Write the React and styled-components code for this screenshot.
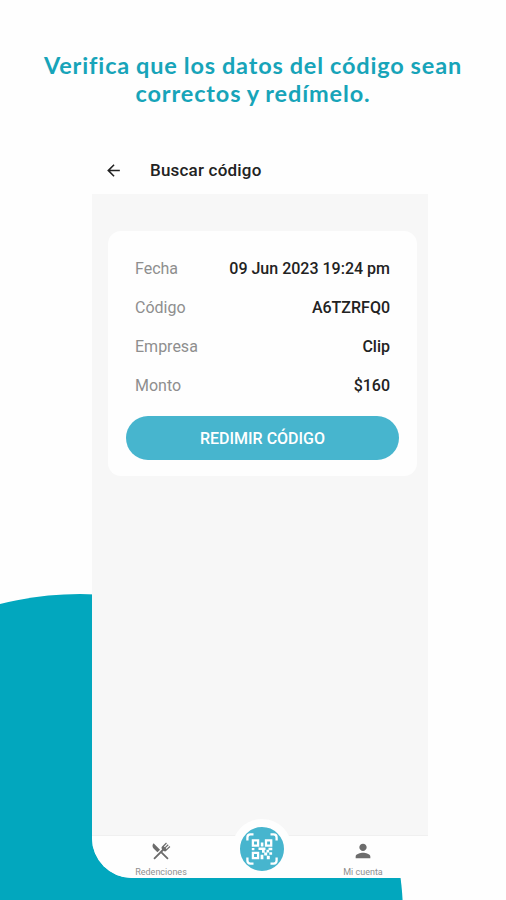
import React from "react";
import styled, { createGlobalStyle } from "styled-components";
import { MdArrowBack, MdPerson } from "react-icons/md";

const GlobalStyle = createGlobalStyle`
    * {
        box-sizing: border-box;
    }

    body {
        margin: 0;
        background-color: #fefefe;
    }
`;

const Page = styled.main`
    position: relative;
    width: 506px;
    height: 900px;
    overflow: hidden;
    background-color: #fefefe;
    font-family: Roboto, "Liberation Sans", sans-serif;
`;

const Blob = styled.div`
    position: absolute;
    left: -243px;
    top: 594px;
    width: 646px;
    height: 646px;
    border-radius: 50%;
    background-color: #02a7be;
`;

const Title = styled.h1`
    height: 147px;
    margin: 0;
    padding-top: 52px;
    color: #17a4b9;
    font-family: Lato, "Open Sans", sans-serif;
    font-size: 23.5px;
    font-weight: 700;
    line-height: 27.5px;
    letter-spacing: 0.85px;
    word-spacing: -0.6px;
    text-align: center;
    white-space: nowrap;
`;

const Phone = styled.section`
    position: relative;
    display: flex;
    flex-direction: column;
    width: 336px;
    height: 731px;
    margin-left: 92px;
    overflow: hidden;
    border-bottom-left-radius: 40px;
    background-color: #f7f7f7;
`;

const TopBar = styled.header`
    display: flex;
    align-items: center;
    gap: 27px;
    height: 47px;
    padding: 0 0 1px 12px;
    background-color: #fefefe;
    color: #222;
`;

const TopBarTitle = styled.h2`
    margin: 0;
    font-size: 17px;
    font-weight: 500;
    letter-spacing: 0.2px;
`;

const Body = styled.div`
    flex: 1;
    padding: 37px 11px 0 16px;
`;

const Card = styled.div`
    height: 245px;
    padding: 18.4px 18px 0;
    border-radius: 13px;
    background-color: #fefefe;
`;

const Row = styled.div`
    display: flex;
    align-items: center;
    justify-content: space-between;
    height: 38.8px;
    padding: 0 9px;
    font-size: 16px;
`;

const Label = styled.span`
    color: #8e8e8e;
`;

const Value = styled.span`
    color: #222;
    font-weight: 500;
`;

const RedeemButton = styled.button`
    display: block;
    width: 273px;
    height: 44px;
    margin-top: 11.8px;
    padding: 0;
    border: 0;
    border-radius: 22px;
    background-color: #47b5ce;
    color: #fff;
    font-family: inherit;
    font-size: 16px;
    font-weight: 500;
`;

const NavBar = styled.nav`
    position: relative;
    display: flex;
    justify-content: space-between;
    height: 43px;
    padding: 0 30px 0 34px;
    border-top: 1px solid #f0f0f0;
    background-color: #fefefe;
`;

const NavItem = styled.div`
    display: flex;
    flex-direction: column;
    align-items: center;
    width: 70px;
    padding-top: 4px;
    color: #6c6c6c;
`;

const NavLabel = styled.span`
    margin-top: 5px;
    color: #8f8f8f;
    font-size: 9px;
    line-height: 11px;
`;

const ScanButton = styled.div`
    position: absolute;
    left: 140px;
    top: -17px;
    display: flex;
    align-items: center;
    justify-content: center;
    width: 60px;
    height: 60px;
    border: 8px solid #fefefe;
    border-radius: 50%;
    background-color: #47b5ce;
`;

const SilverwareIcon = () => (
    <svg width="22" height="22" viewBox="0 0 24 24" fill="currentColor">
        <path d="M8.1 13.34L3.91 9.16C2.35 7.59 2.35 5.06 3.91 3.5L10.93 10.5L8.1 13.34M13.41 13L20.29 19.88L18.88 21.29L12 14.41L5.12 21.29L3.71 19.88L13.36 10.22L13.16 10C12.38 9.23 12.38 7.97 13.16 7.19L17.5 2.82L18.43 3.74L15.19 7L16.15 7.94L19.39 4.69L20.31 5.61L17.06 8.85L18 9.81L21.26 6.56L22.18 7.5L17.81 11.84C17.03 12.62 15.77 12.62 15 11.84L14.78 11.64L13.41 13Z" />
    </svg>
);

const QrIcon = () => (
    <svg width="32" height="32" viewBox="0 0 32 32" fill="none" stroke="#fff">
        <path
            d="M1.4 7.5V4.4Q1.4 1.4 4.4 1.4H7.5M24.5 1.4H27.6Q30.6 1.4 30.6 4.4V7.5M1.4 24.5V27.6Q1.4 30.6 4.4 30.6H7.5M24.5 30.6H27.6Q30.6 30.6 30.6 27.6V24.5"
            strokeWidth="2.3"
        />
        <path d="M6.9 7.4h5.2v5.2H6.9zM20 7.4h5.2v5.2H20zM6.9 19.9h5.2v5.2H6.9z" strokeWidth="2.3" />
        <path
            d="M14.8 9.5h2.6v4h-2.6zM5.8 15h2.6v2.3H5.8zM12.5 14.6h7v2.4h-7zM22.5 14.8h3.8v2.4h-3.8zM16 17h2.7v2.7H16zM20.5 16.8h2.6v2.6h-2.6zM23.3 19.2h2.8v2.6h-2.8zM14.6 21.8h2.8v4.4h-2.8zM18.2 19.5h3v3h-3zM20.8 22.8h3v3.4h-3z"
            fill="#fff"
            stroke="none"
        />
    </svg>
);

const rows = [
    { label: "Fecha", value: "09 Jun 2023 19:24 pm" },
    { label: "Código", value: "A6TZRFQ0" },
    { label: "Empresa", value: "Clip" },
    { label: "Monto", value: "$160" },
];

const App = () => (
    <>
        <GlobalStyle />
        <Page>
            <Blob />
            <Title>
                Verifica que los datos del código sean
                <br />
                correctos y redímelo.
            </Title>
            <Phone>
                <TopBar>
                    <MdArrowBack size={19} />
                    <TopBarTitle>Buscar código</TopBarTitle>
                </TopBar>
                <Body>
                    <Card>
                        {rows.map(({ label, value }) => (
                            <Row key={label}>
                                <Label>{label}</Label>
                                <Value>{value}</Value>
                            </Row>
                        ))}
                        <RedeemButton>REDIMIR CÓDIGO</RedeemButton>
                    </Card>
                </Body>
                <NavBar>
                    <NavItem>
                        <SilverwareIcon />
                        <NavLabel>Redenciones</NavLabel>
                    </NavItem>
                    <ScanButton>
                        <QrIcon />
                    </ScanButton>
                    <NavItem>
                        <MdPerson size={22} />
                        <NavLabel>Mi cuenta</NavLabel>
                    </NavItem>
                </NavBar>
            </Phone>
        </Page>
    </>
);

export default App;
